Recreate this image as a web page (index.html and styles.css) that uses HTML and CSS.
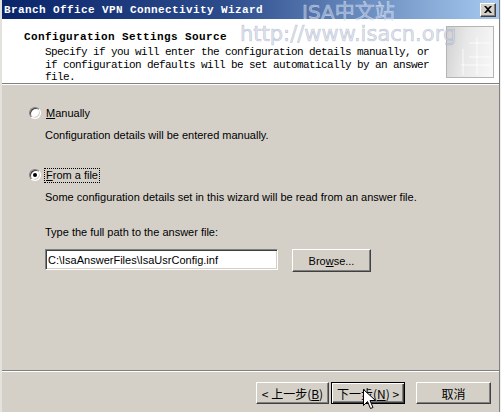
FILE: index.html
```html
<!DOCTYPE html>
<html lang="en">
<head>
    <meta charset="UTF-8">
    <title>Branch Office VPN Connectivity Wizard</title>
    <link rel="stylesheet" href="styles.css">
</head>
<body>

<div class="dialog">
    <div class="titlebar">
        <span class="title">Branch Office VPN Connectivity Wizard</span>
        <span class="close-btn">
            <svg width="8" height="7" viewBox="0 0 8 7"><path d="M0 0h2l2 2 2-2h2L5 3.5 8 7H6L4 5 2 7H0l3-3.5z" fill="#000"/></svg>
        </span>
    </div>

    <div class="header">
        <div class="header-text">
            <div class="heading">Configuration Settings Source</div>
            <div class="desc">Specify if you will enter the configuration details manually, or<br>if configuration defaults will be set automatically by an answer<br>file.</div>
        </div>
        <div class="header-icon">
            <svg width="46" height="50" viewBox="0 0 46 50">
                <path d="M22 16h22M22 30h22M14 38h30M30 10v38M16 22v26" stroke="#fff" stroke-width="1" fill="none" opacity="0.8"/>
            </svg>
        </div>
    </div>

    <div class="content">
        <label class="option">
            <span class="radio"></span>
            <span><u>M</u>anually</span>
        </label>
        <p class="note">Configuration details will be entered manually.</p>

        <label class="option option-second">
            <span class="radio checked"></span>
            <span class="focus"><u>F</u>rom a file</span>
        </label>
        <p class="note">Some configuration details set in this wizard will be read from an answer file.</p>

        <p class="note path-label">Type the full path to the answer file:</p>
        <div class="path-row">
            <input class="path-input" type="text" value="C:\IsaAnswerFiles\IsaUsrConfig.inf">
            <button class="btn browse">Bro<u>w</u>se...</button>
        </div>
    </div>

    <div class="footer">
        <button class="btn cjk back">&lt; 上一步(<u>B</u>)</button>
        <button class="btn cjk next">下一步(<u>N</u>) &gt;</button>
        <button class="btn cjk cancel">取消</button>
    </div>

    <div class="mark mark-top">ISA中文站</div>
    <div class="mark mark-url">http://www.isacn.org</div>

    <svg class="cursor" width="13" height="21" viewBox="0 0 13 21">
        <path d="M0.5 0.5v16l4-4 3 7 2.5-1-3-7h5.5z" fill="#fff" stroke="#000" stroke-width="1"/>
    </svg>
</div>

</body>
</html>
```

FILE: styles.css
```css
html, body { margin: 0; padding: 0; background: #eeeeee; }
.dialog { position: relative; width: 500px; height: 412px; box-sizing: border-box; background: #d4d0c8; border-right: 1px solid #808080; border-left: 2px solid #e4e2dc; display: flex; flex-direction: column; overflow: hidden; font-family: "Liberation Sans", Arial, sans-serif; font-size: 11px; color: #000; }

.titlebar { height: 19px; flex: none; display: flex; align-items: center; justify-content: space-between; padding: 0 3px 0 2px; background: linear-gradient(to right, #0a246a, #2c4c8c 45%, #a6caf0); }
.title { font-family: "Liberation Mono", monospace; font-weight: bold; font-size: 11px; letter-spacing: 0.4px; color: #fff; }
.close-btn { width: 16px; height: 14px; box-sizing: border-box; display: flex; align-items: center; justify-content: center; background: #d4d0c8; border: 1px solid; border-color: #fff #404040 #404040 #fff; box-shadow: inset -1px -1px #808080; }

.header { height: 64px; flex: none; display: flex; background: #fff; border-bottom: 1px solid #808080; box-shadow: 0 1px #fff; }
.header-text { flex: 1; padding: 12px 0 0 22px; font-family: "Liberation Mono", monospace; }
.heading { font-weight: bold; font-size: 11px; letter-spacing: 0.4px; line-height: 12px; }
.desc { margin: 3px 0 0 21px; font-size: 11px; letter-spacing: -0.6px; line-height: 12.5px; }
.header-icon { width: 46px; height: 50px; margin: 7px 5px 0 0; border: 1px solid #b4b4b4; background: linear-gradient(100deg, #d0d0d0, #e8e8e8 40%, #f8f8f8); }
.header-icon svg { display: block; }

.content { flex: 1; padding: 22px 0 0 27px; }
.option { display: flex; align-items: center; height: 14px; }
.option-second { margin-top: 26px; }
.radio { position: relative; width: 12px; height: 12px; box-sizing: border-box; margin-right: 5px; border-radius: 50%; background: #fff; border: 1px solid; border-color: #808080 #fff #fff #808080; box-shadow: inset 1px 1px #404040, inset -1px -1px #d4d0c8; }
.radio.checked::after { content: ''; position: absolute; left: 3px; top: 3px; width: 4px; height: 4px; border-radius: 50%; background: #000; }
.focus { outline: 1px dotted #000; outline-offset: 0; padding: 0 1px 1px 1px; margin-left: -1px; }
.note { margin: 8px 0 0 16px; height: 14px; line-height: 14px; }
.path-label { margin-top: 21px; }
.path-row { display: flex; align-items: flex-start; margin: 10px 0 0 16px; gap: 14px; }
.path-input { width: 233px; height: 21px; box-sizing: border-box; padding: 0 2px; font-family: "Liberation Sans", Arial, sans-serif; font-size: 11px; background: #fff; border: 1px solid; border-color: #808080 #fff #fff #808080; box-shadow: inset 1px 1px #404040, inset -1px -1px #d4d0c8; outline: none; }

.btn { height: 22px; box-sizing: border-box; padding: 0; background: #d4d0c8; font-family: "Liberation Sans", Arial, sans-serif; font-size: 11px; color: #000; border: 1px solid; border-color: #fff #404040 #404040 #fff; box-shadow: inset -1px -1px #808080; }
.browse { width: 79px; height: 23px; }
.cjk { font-family: "Noto Sans CJK SC", sans-serif; font-size: 12px; }

.footer { height: 42px; flex: none; box-sizing: border-box; display: flex; align-items: flex-start; justify-content: flex-end; padding: 11px 8px 0 0; border-top: 1px solid #808080; box-shadow: inset 0 1px #fff; }
.back { width: 73px; }
.next { width: 74px; margin-left: 2px; border: 1px solid #000; box-shadow: inset 1px 1px #fff, inset -1px -1px #404040, inset -2px -2px #808080; }
.cancel { width: 75px; margin-left: 11px; }

.mark { position: absolute; line-height: 1; pointer-events: none; white-space: nowrap; }
.mark-top { left: 300px; top: 2px; font-family: "DejaVu Sans", "Noto Sans CJK SC", sans-serif; font-size: 20px; color: rgba(190, 204, 228, 0.5); -webkit-text-stroke: 0.6px rgba(235, 240, 250, 0.6); }
.mark-url { left: 238px; top: 24px; font-family: "DejaVu Sans", sans-serif; font-size: 21px; color: rgba(205, 212, 228, 0.6); -webkit-text-stroke: 0.6px rgba(150, 162, 190, 0.55); }
.cursor { position: absolute; left: 361px; top: 389px; }
```
